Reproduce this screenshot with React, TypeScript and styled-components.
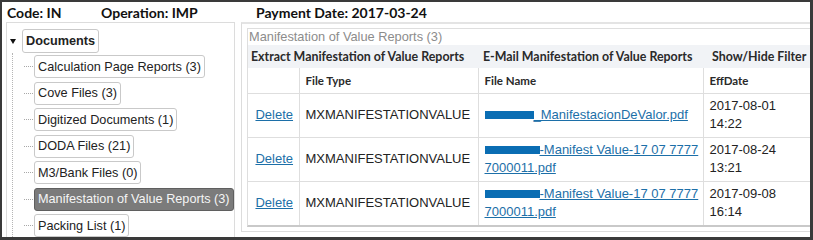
import React from 'react';
import styled, { createGlobalStyle } from 'styled-components';

const GlobalStyle = createGlobalStyle`
  html, body {
    margin: 0;
    padding: 0;
    background: #fff;
  }
  body {
    font-family: "Liberation Sans", Arial, sans-serif;
    color: #222;
  }
  * {
    box-sizing: border-box;
  }
`;

const Frame = styled.div`
  width: 813px;
  height: 240px;
  overflow: hidden;
  background: #fff;
  border: 2px solid #3a3a3a;
  border-right-width: 3px;
  border-bottom-width: 3px;
`;

const HeaderBar = styled.div`
  display: grid;
  grid-template-columns: 94px 155px 1fr;
  align-items: center;
  height: 20px;
  padding-left: 5px;
  font-family: Lato, "Open Sans", sans-serif;
  font-weight: 700;
  font-size: 14px;
  color: #111;
`;

const Body = styled.div`
  display: flex;
  gap: 6px;
  padding-left: 4px;
  height: 215px;
`;

const LeftPanel = styled.div`
  flex: none;
  width: 229px;
  border: 1px solid #dcdcdc;
  border-bottom: none;
  padding: 6px 0 0 3px;
`;

const RootRow = styled.div`
  display: flex;
  align-items: center;
`;

const Toggle = styled.span`
  width: 0;
  height: 0;
  margin-right: 6px;
  border-left: 3px solid transparent;
  border-right: 3px solid transparent;
  border-top: 5px solid #111;
`;

const NodeBox = styled.span<{ selected?: boolean; bold?: boolean }>`
  display: inline-flex;
  align-items: center;
  height: ${p => (p.bold ? 24 : 23)}px;
  padding: 0 3px;
  border: 1px solid ${p => (p.selected ? '#5f5f5f' : '#c9c9c9')};
  border-radius: 3px;
  background: ${p => (p.selected ? '#7b7b7b' : '#fff')};
  color: ${p => (p.selected ? '#f5f5f5' : '#222')};
  font-size: 12.7px;
  font-weight: ${p => (p.bold ? 700 : 400)};
  white-space: nowrap;
`;

const ChildList = styled.ul`
  position: relative;
  list-style: none;
  margin: 2px 0 0;
  padding: 0 0 0 24px;
  display: flex;
  flex-direction: column;
  gap: 3.5px;

  &::before {
    content: '';
    position: absolute;
    left: 2px;
    top: -2px;
    bottom: -40px;
    border-left: 1px dotted #b5b5b5;
  }
`;

const ChildItem = styled.li`
  position: relative;
  display: flex;

  &::before {
    content: '';
    position: absolute;
    left: -10px;
    width: 9px;
    top: 11px;
    border-top: 1px dotted #a8a8a8;
  }
`;

const RightPanel = styled.div`
  flex: none;
  width: 580px;
  height: 210px;
  border: 1px solid #dcdcdc;
  border-top: 2px solid #e4e4e4;
  padding: 4px 5px 0;
`;

const InnerBox = styled.div`
  border: 1px solid #dedede;
  border-bottom: 2px solid #c9c9c9;
`;

const Title = styled.div`
  height: 16px;
  line-height: 16px;
  padding-left: 1px;
  font-size: 12.8px;
  color: #8c8c8c;
`;

const Toolbar = styled.div`
  display: grid;
  grid-template-columns: 232px 229px auto;
  align-items: center;
  height: 23px;
  padding-left: 3px;
  background: #f1f3f6;
  font-family: Lato, "Open Sans", sans-serif;
  font-weight: 700;
  font-size: 12.4px;
  color: #2a2a2a;
  white-space: nowrap;
`;

const Table = styled.table`
  width: 563px;
  border-collapse: collapse;
  table-layout: fixed;
`;

const HeadCell = styled.th`
  height: 25px;
  padding: 0 6px;
  text-align: left;
  font-family: Lato, "Open Sans", sans-serif;
  font-weight: 700;
  font-size: 11.5px;
  color: #2a2a2a;
  border-left: 1px solid #dedede;
  border-bottom: 1px solid #dedede;

  &:first-child {
    border-left: none;
  }
`;

const Cell = styled.td<{ center?: boolean }>`
  height: 44px;
  padding: 0 2px 0 6px;
  font-size: 13px;
  line-height: 18px;
  color: #222;
  text-align: ${p => (p.center ? 'center' : 'left')};
  vertical-align: middle;
  border-left: 1px solid #dedede;
  border-bottom: 1px solid #dedede;

  &:first-child {
    border-left: none;
    padding: 0 4px 0 6px;
  }

  tr:last-child > & {
    border-bottom: none;
  }
`;

const Link = styled.a`
  color: #1c6fa8;
  text-decoration: underline;
  cursor: pointer;
`;

const Redacted = styled.span<{ w: number }>`
  display: inline-block;
  width: ${p => p.w}px;
  height: 8px;
  background: #0a6db3;
  vertical-align: 0px;
`;

const docs = [
  'Calculation Page Reports (3)',
  'Cove Files (3)',
  'Digitized Documents (1)',
  'DODA Files (21)',
  'M3/Bank Files (0)',
  'Manifestation of Value Reports (3)',
  'Packing List (1)',
];

const rows = [
  { bar: 49, name: '_ManifestacionDeValor.pdf', date: '2017-08-01', time: '14:22' },
  { bar: 55, name: '-Manifest Value-17 07 7777 7000011.pdf', date: '2017-08-24', time: '13:21' },
  { bar: 55, name: '-Manifest Value-17 07 7777 7000011.pdf', date: '2017-09-08', time: '16:14' },
];

export default function App() {
  return (
    <>
      <GlobalStyle />
      <Frame>
        <HeaderBar>
          <span>Code: IN</span>
          <span>Operation: IMP</span>
          <span>Payment Date: 2017-03-24</span>
        </HeaderBar>
        <Body>
          <LeftPanel>
            <RootRow>
              <Toggle />
              <NodeBox bold>Documents</NodeBox>
            </RootRow>
            <ChildList>
              {docs.map(d => (
                <ChildItem key={d}>
                  <NodeBox selected={d.startsWith('Manifestation')}>{d}</NodeBox>
                </ChildItem>
              ))}
            </ChildList>
          </LeftPanel>
          <RightPanel>
            <InnerBox>
              <Title>Manifestation of Value Reports (3)</Title>
              <Toolbar>
                <span>Extract Manifestation of Value Reports</span>
                <span>E-Mail Manifestation of Value Reports</span>
                <span>Show/Hide Filter</span>
              </Toolbar>
              <Table>
                <colgroup>
                  <col style={{ width: 51 }} />
                  <col style={{ width: 179 }} />
                  <col style={{ width: 225 }} />
                  <col />
                </colgroup>
                <thead>
                  <tr>
                    <HeadCell />
                    <HeadCell>File Type</HeadCell>
                    <HeadCell>File Name</HeadCell>
                    <HeadCell>EffDate</HeadCell>
                  </tr>
                </thead>
                <tbody>
                  {rows.map((r, i) => (
                    <tr key={i}>
                      <Cell center>
                        <Link>Delete</Link>
                      </Cell>
                      <Cell>MXMANIFESTATIONVALUE</Cell>
                      <Cell>
                        <Link>
                          <Redacted w={r.bar} />
                          {r.name}
                        </Link>
                      </Cell>
                      <Cell>
                        {r.date}
                        <br />
                        {r.time}
                      </Cell>
                    </tr>
                  ))}
                </tbody>
              </Table>
            </InnerBox>
          </RightPanel>
        </Body>
      </Frame>
    </>
  );
}
